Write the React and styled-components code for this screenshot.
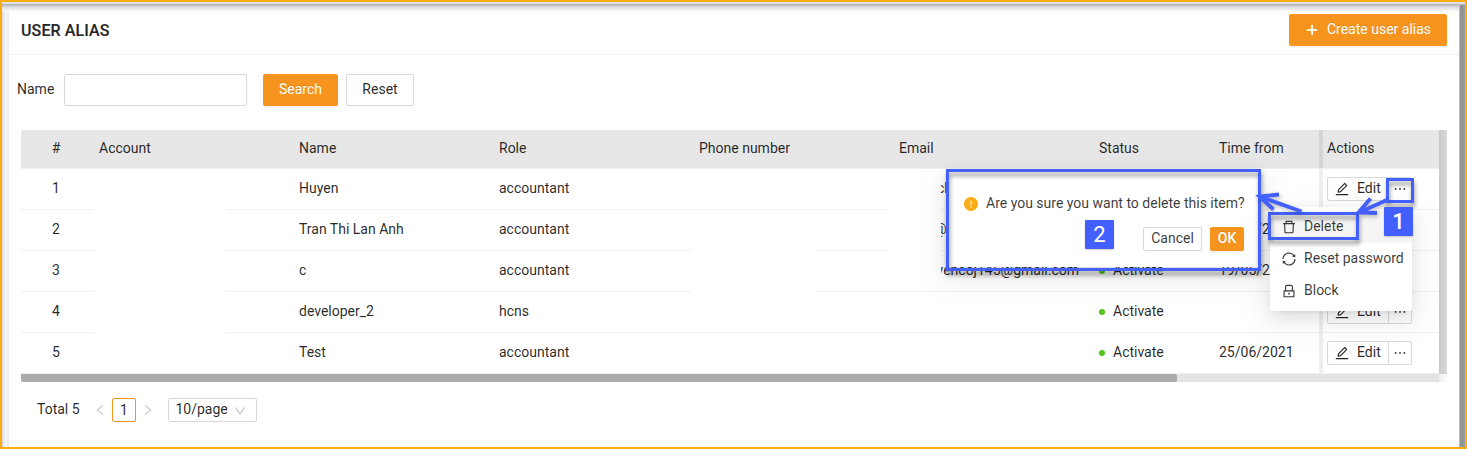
import React from "react";
import styled, { createGlobalStyle, css } from "styled-components";
import {
  AiOutlinePlus,
  AiOutlineEdit,
  AiOutlineEllipsis,
  AiOutlineDelete,
  AiOutlineSync,
  AiOutlineLock,
  AiOutlineLeft,
  AiOutlineRight,
  AiOutlineDown,
  AiFillExclamationCircle,
} from "react-icons/ai";

const ORANGE = "#f7941d";
const BLUE = "#4360ff";
const TEXT = "rgba(0, 0, 0, 0.85)";

const GlobalStyle = createGlobalStyle`
  * { box-sizing: border-box; }
  body {
    margin: 0;
    background: #fff;
    color: ${TEXT};
    font-family: Roboto, "Liberation Sans", sans-serif;
    font-size: 14px;
    line-height: 22px;
  }
  button, input { font: inherit; color: inherit; }
  svg { display: block; flex: none; }
`;

const Frame = styled.div`
  position: relative;
  width: 1467px;
  height: 449px;
  border: 2px solid #faad0c;
  padding: 0 5px 0 5px;
  display: flex;
  overflow: hidden;
  background: linear-gradient(90deg, #d4d6d8 0, #f4f4f4 3px, #f7f7f7 5px, #fff 6px);
`;

const TopShade = styled.div`
  position: absolute;
  inset: 0 0 auto 0;
  height: 11px;
  background: linear-gradient(#e6e7e9 0, #dcdddf 1.5px, #b4b5b8 2px, #b9babc 3px, #dcdcdd 5px, #f3f3f3 8px, rgba(255, 255, 255, 0) 11px);
`;

const RightShade = styled.div`
  position: absolute;
  inset: 3px 0 0 auto;
  width: 6px;
  background: linear-gradient(90deg, #d5d6d8 0, #999a9d 1px, #8f9094 3px, #a0a1a5 6px);
`;

const Card = styled.main`
  flex: 1;
  display: flex;
  flex-direction: column;
  background: #fff;
  border-left: 2px solid #eeeeee;
`;

const CardHeader = styled.header`
  height: 53px;
  display: flex;
  align-items: center;
  justify-content: space-between;
  padding: 3px 13px 0 12px;
  border-bottom: 1px solid #f0f0f0;
`;

const Title = styled.h1`
  margin: 0;
  padding-top: 2px;
  font-size: 16px;
  font-weight: 500;
  line-height: 24px;
  letter-spacing: 0.12px;
  -webkit-text-stroke: 0.2px currentColor;
`;

const Button = styled.button`
  display: inline-flex;
  align-items: center;
  justify-content: center;
  gap: 8px;
  width: ${(p) => p.$w}px;
  height: ${(p) => (p.$small ? 24 : 32)}px;
  padding: 0 0 2px;
  border: 1px solid #d9d9d9;
  border-radius: 2px;
  background: #fff;
  box-shadow: 0 2px 0 rgba(0, 0, 0, 0.016);
  white-space: nowrap;
  svg { margin: 2px 1px 0; }
  ${(p) =>
    p.$primary &&
    css`
      border-color: ${ORANGE};
      background: ${ORANGE};
      color: #fff;
      font-weight: ${p.$strong ? 500 : 400};
      text-shadow: 0 -1px 0 rgba(0, 0, 0, 0.12);
      box-shadow: 0 2px 0 rgba(0, 0, 0, 0.045);
    `}
`;

const Filters = styled.form`
  display: flex;
  align-items: center;
  padding: 19px 0 24px 8px;
`;

const FieldLabel = styled.label`
  width: 47px;
  padding-bottom: 2px;
`;

const Input = styled.input`
  width: 183px;
  height: 32px;
  margin-right: 16px;
  border: 1px solid #d9d9d9;
  border-radius: 2px;
  outline: 0;
`;

const FilterButtons = styled.div`
  display: flex;
  gap: 8px;
`;

const TableWrap = styled.section`
  position: relative;
  width: 1426px;
  margin-left: 12px;
  display: flex;
`;

const TableMain = styled.div`
  width: 1418px;
`;

const rowGrid = css`
  display: grid;
  grid-template-columns: 70px 200px 200px 200px 200px 200px 120px 112px 116px;
`;

const HeadRow = styled.div`
  ${rowGrid}
  height: 39px;
  background: #e7e7e7;
  border-bottom: 1px solid #f0f0f0;
  border-top-left-radius: 2px;
`;

const Row = styled.div`
  ${rowGrid}
  height: 41px;
  border-bottom: 1px solid #f0f0f0;
`;

const Cell = styled.div`
  display: flex;
  align-items: center;
  padding: 0 8px 2px;
  white-space: nowrap;
  justify-content: ${(p) => (p.$center ? "center" : p.$end ? "flex-end" : "flex-start")};
  ${(p) => p.$end && "padding-right: 12px;"}
`;

const ActionCell = styled(Cell)`
  padding: 0 0 ${(p) => (p.$head ? 2 : 1)}px 4px;
  background: ${(p) => (p.$head ? "#e7e7e7" : "#fff")};
  box-shadow: -4px 0 0 ${(p) => (p.$head ? "#d5d5d5" : "#eeeeee")};
`;

const Dot = styled.span`
  width: 6px;
  height: 6px;
  margin: 1px 8px 0 0;
  border-radius: 50%;
  background: #52c41a;
`;

const SplitButton = styled.div`
  display: flex;
  width: 85px;
  height: 24px;
  border: 1px solid #d9d9d9;
  border-radius: 2px;
`;

const SplitPart = styled.button`
  display: flex;
  align-items: center;
  gap: 8px;
  width: ${(p) => p.$w}px;
  padding: 0 0 2px ${(p) => p.$left}px;
  border: 0;
  border-right: ${(p) => (p.$divider ? "1px solid #d9d9d9" : "0")};
  background: none;
  line-height: 20px;
  svg { margin-top: 2px; }
`;

const EdgeShade = styled.div`
  width: 8px;
  height: 244px;
  background: linear-gradient(90deg, #c9c9c9, #d9d9d9);
`;

const ScrollTrack = styled.div`
  width: 1426px;
  height: 8px;
  background: linear-gradient(90deg, #e3e3e3 1418px, #f0f0f0 1418px, #fafafa 1426px);
`;

const ScrollThumb = styled.div`
  width: 1156px;
  height: 8px;
  border-radius: 0 2px 2px 2px;
  background: #ababab;
`;

const Redaction = styled.div`
  position: absolute;
  left: ${(p) => p.$x}px;
  top: ${(p) => p.$y}px;
  width: ${(p) => p.$w}px;
  height: ${(p) => p.$h}px;
  background: #fff;
`;

const Pager = styled.nav`
  display: flex;
  align-items: center;
  padding: 16px 0 0 28px;
  svg { color: #bfbfbf; }
`;

const PagerTotal = styled.span`
  width: 57px;
  padding-bottom: 2px;
`;

const PageNumber = styled.span`
  width: 24px;
  height: 24px;
  margin: 0 6px;
  border: 1px solid ${ORANGE};
  border-radius: 2px;
  text-align: center;
  line-height: 23px;
`;

const PageSize = styled.div`
  display: flex;
  align-items: center;
  justify-content: space-between;
  width: 89px;
  height: 24px;
  margin-left: 14px;
  padding: 0 10px 0 6.5px;
  border: 1px solid #d9d9d9;
  border-radius: 2px;
  line-height: 20px;
  span { padding-bottom: 2px; }
  svg { margin-top: 2px; }
`;

const floating = css`
  position: absolute;
  background: #fff;
  color: rgba(0, 0, 0, 0.78);
  box-shadow: 0 3px 6px -4px rgba(0, 0, 0, 0.12), 0 6px 16px rgba(0, 0, 0, 0.08),
    0 9px 28px 8px rgba(0, 0, 0, 0.05);
`;

const Confirm = styled.div`
  ${floating}
  left: 945px;
  top: 168px;
  width: 313px;
  height: 97px;
  padding: 22px 16px 12px 17px;
`;

const ConfirmMessage = styled.div`
  display: flex;
  align-items: center;
  gap: 8px;
  white-space: nowrap;
  svg { color: #faad14; margin-top: 2px; }
`;

const ConfirmButtons = styled.div`
  display: flex;
  justify-content: flex-end;
  gap: 8px;
  margin-top: 13px;
`;

const Menu = styled.div`
  ${floating}
  left: 1268px;
  top: 205px;
  width: 142px;
  padding: 4px 0;
  border-radius: 2px;
`;

const MenuItem = styled.div`
  display: flex;
  align-items: center;
  gap: 8px;
  height: 32px;
  padding: 0 12px 2px;
  background: ${(p) => (p.$active ? "#f5f5f5" : "transparent")};
  white-space: nowrap;
  svg { margin-top: 2px; }
`;

const Highlight = styled.div`
  position: absolute;
  left: ${(p) => p.$x}px;
  top: ${(p) => p.$y}px;
  width: ${(p) => p.$w}px;
  height: ${(p) => p.$h}px;
  border: 3px solid ${BLUE};
  filter: drop-shadow(1px 4px 2px rgba(0, 0, 0, 0.4));
`;

const StepBadge = styled.div`
  position: absolute;
  left: ${(p) => p.$x}px;
  top: ${(p) => p.$y}px;
  width: 29px;
  height: 29px;
  border-radius: 1px;
  background: ${BLUE};
  color: #fff;
  font-size: 22px;
  line-height: 29px;
  text-align: center;
  box-shadow: 0 1px 2px rgba(0, 0, 0, 0.2);
  ${(p) => p.$bold && "font-weight: 500;"}
`;

const Arrows = styled.svg`
  position: absolute;
  left: -2px;
  top: -2px;
  filter: drop-shadow(1px 2px 2px rgba(0, 0, 0, 0.25));
`;

const columns = ["Account", "Name", "Role", "Phone number", "Email", "Status", "Time from"];

const rows = [
  { name: "Huyen", role: "accountant", email: "ck", emailPad: 38, actions: true },
  { name: "Tran Thi Lan Anh", role: "accountant", email: "@", emailPad: 35, time: "19/05/2021" },
  { name: "c", role: "accountant", email: "huyencoj145@gmail.com", status: "Activate", time: "19/05/2021" },
  { name: "developer_2", role: "hcns", status: "Activate", actions: true },
  { name: "Test", role: "accountant", status: "Activate", time: "25/06/2021", actions: true },
];

const EmailText = styled.span`
  padding-left: ${(p) => p.$pad || 0}px;
`;

const GLYPH_BOX = "64 64 896 896";

function Glyph({ as: Icon, size = 14 }) {
  return <Icon size={size} viewBox={GLYPH_BOX} />;
}

const HeavyPlus = styled(AiOutlinePlus)`
  stroke-width: 60px;
`;

function RowActions() {
  return (
    <SplitButton>
      <SplitPart $w={61} $left={7} $divider>
        <Glyph as={AiOutlineEdit} />
        Edit
      </SplitPart>
      <SplitPart $w={22} $left={4}>
        <Glyph as={AiOutlineEllipsis} />
      </SplitPart>
    </SplitButton>
  );
}

function UserTable() {
  return (
    <TableWrap>
      <TableMain>
        <HeadRow>
          <Cell $center>#</Cell>
          {columns.map((c) => (
            <Cell key={c}>{c}</Cell>
          ))}
          <ActionCell $head>Actions</ActionCell>
        </HeadRow>
        {rows.map((r, i) => (
          <Row key={r.name}>
            <Cell $center>{i + 1}</Cell>
            <Cell />
            <Cell>{r.name}</Cell>
            <Cell>{r.role}</Cell>
            <Cell />
            <Cell $end={!!r.email && !r.emailPad}>
              <EmailText $pad={r.emailPad}>{r.email}</EmailText>
            </Cell>
            <Cell>
              {r.status && <Dot />}
              {r.status}
            </Cell>
            <Cell>{r.time}</Cell>
            <ActionCell>{r.actions && <RowActions />}</ActionCell>
          </Row>
        ))}
        <ScrollTrack>
          <ScrollThumb />
        </ScrollTrack>
      </TableMain>
      <EdgeShade />
      <Redaction $x={73} $y={40} $w={132} $h={200} />
      <Redaction $x={670} $y={100} $w={126} $h={80} />
      <Redaction $x={868} $y={40} $w={52} $h={111} />
    </TableWrap>
  );
}

export default function App() {
  return (
    <>
      <GlobalStyle />
      <Frame>
        <Card>
          <CardHeader>
            <Title>USER ALIAS</Title>
            <Button $primary $w={158}>
              <HeavyPlus size={12} viewBox={GLYPH_BOX} />
              Create user alias
            </Button>
          </CardHeader>
          <Filters>
            <FieldLabel>Name</FieldLabel>
            <Input />
            <FilterButtons>
              <Button type="button" $primary $w={75}>
                Search
              </Button>
              <Button type="button" $w={68}>
                Reset
              </Button>
            </FilterButtons>
          </Filters>
          <UserTable />
          <Pager>
            <PagerTotal>Total 5</PagerTotal>
            <Glyph as={AiOutlineLeft} size={12} />
            <PageNumber>1</PageNumber>
            <Glyph as={AiOutlineRight} size={12} />
            <PageSize>
              <span>10/page</span>
              <Glyph as={AiOutlineDown} size={12} />
            </PageSize>
          </Pager>
        </Card>
        <TopShade />
        <RightShade />
        <Confirm>
          <ConfirmMessage>
            <Glyph as={AiFillExclamationCircle} />
            Are you sure you want to delete this item?
          </ConfirmMessage>
          <ConfirmButtons>
            <Button $small $w={59}>
              Cancel
            </Button>
            <Button $small $primary $strong $w={34}>
              OK
            </Button>
          </ConfirmButtons>
        </Confirm>
        <Menu>
          <MenuItem $active>
            <Glyph as={AiOutlineDelete} />
            Delete
          </MenuItem>
          <MenuItem>
            <Glyph as={AiOutlineSync} />
            Reset password
          </MenuItem>
          <MenuItem>
            <Glyph as={AiOutlineLock} />
            Block
          </MenuItem>
        </Menu>
        <Highlight $x={944} $y={167} $w={315} $h={102} />
        <Highlight $x={1384} $y={176} $w={28} $h={25} />
        <Highlight $x={1266} $y={210} $w={91} $h={28} />
        <Arrows width="1467" height="449" fill="none" stroke={BLUE} strokeWidth="3.8">
          <path d="M1388 199.500L1359 212.500M1370.500 198.500L1358.500 212.500L1377 213" />
          <path d="M1301.500 211.500L1261 197M1279 194.500L1259.500 196.500L1273.500 209.500" />
        </Arrows>
        <StepBadge $x={1083} $y={218}>2</StepBadge>
        <StepBadge $x={1382} $y={205} $bold>1</StepBadge>
      </Frame>
    </>
  );
}
